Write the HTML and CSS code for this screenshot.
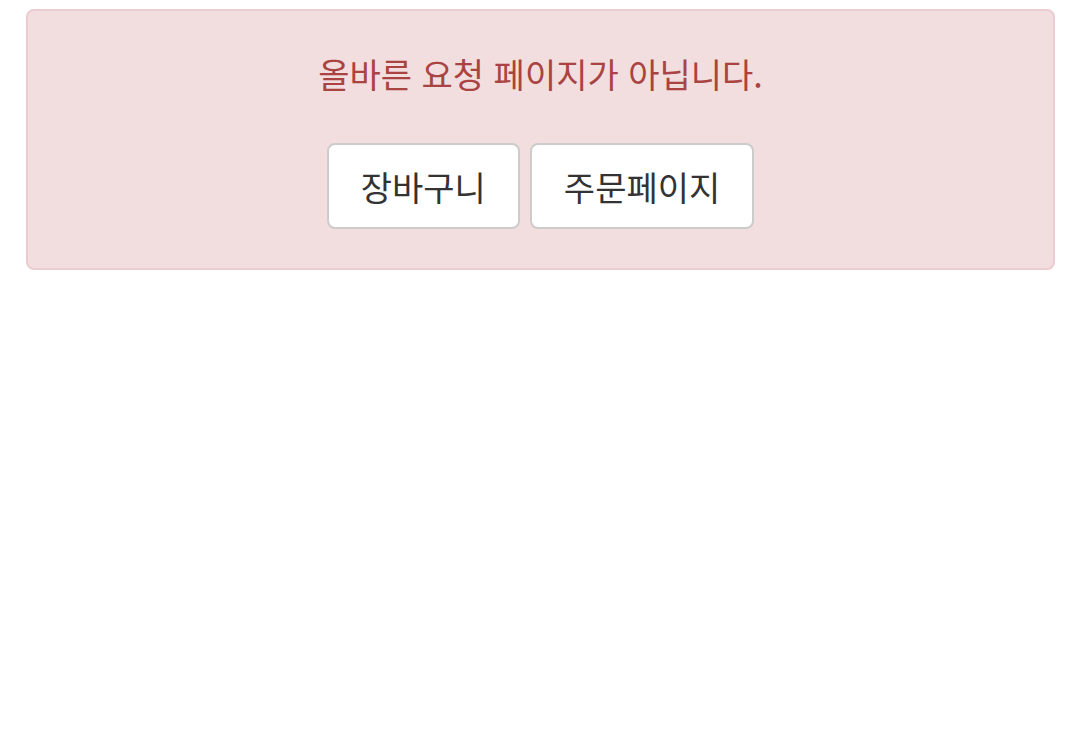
FILE: index.html
```html
<!DOCTYPE html>
<html lang="ko">
<head>
    <meta charset="UTF-8">
    <title>잘못된 요청</title>
    <link rel="stylesheet" href="styles.css">
</head>
<body>
    <div class="alert">
        <p class="message">올바른 요청 페이지가 아닙니다.</p>
        <div class="buttons">
            <a class="btn" href="#">장바구니</a>
            <a class="btn" href="#">주문페이지</a>
        </div>
    </div>
</body>
</html>
```

FILE: styles.css
```css
* {
    box-sizing: border-box;
}
body {
    margin: 0;
    background: #fff;
    font-family: "Noto Sans CJK KR", "Noto Sans", sans-serif;
}
.alert {
    margin: 9px 25px 0 26px;
    padding: 42px 20px 39px;
    background: #f2dede;
    border: 2px solid #ebccd1;
    border-radius: 8px;
    text-align: center;
}
.message {
    margin: 0 0 48px;
    font-size: 34px;
    line-height: 42px;
    color: #a94442;
}
.buttons {
    display: flex;
    justify-content: center;
    gap: 10px;
}
.btn {
    display: inline-flex;
    align-items: center;
    height: 86px;
    padding: 0 32px;
    background: #fff;
    border: 2px solid #ccc;
    border-radius: 8px;
    font-size: 34px;
    color: #333;
    text-decoration: none;
}
```
